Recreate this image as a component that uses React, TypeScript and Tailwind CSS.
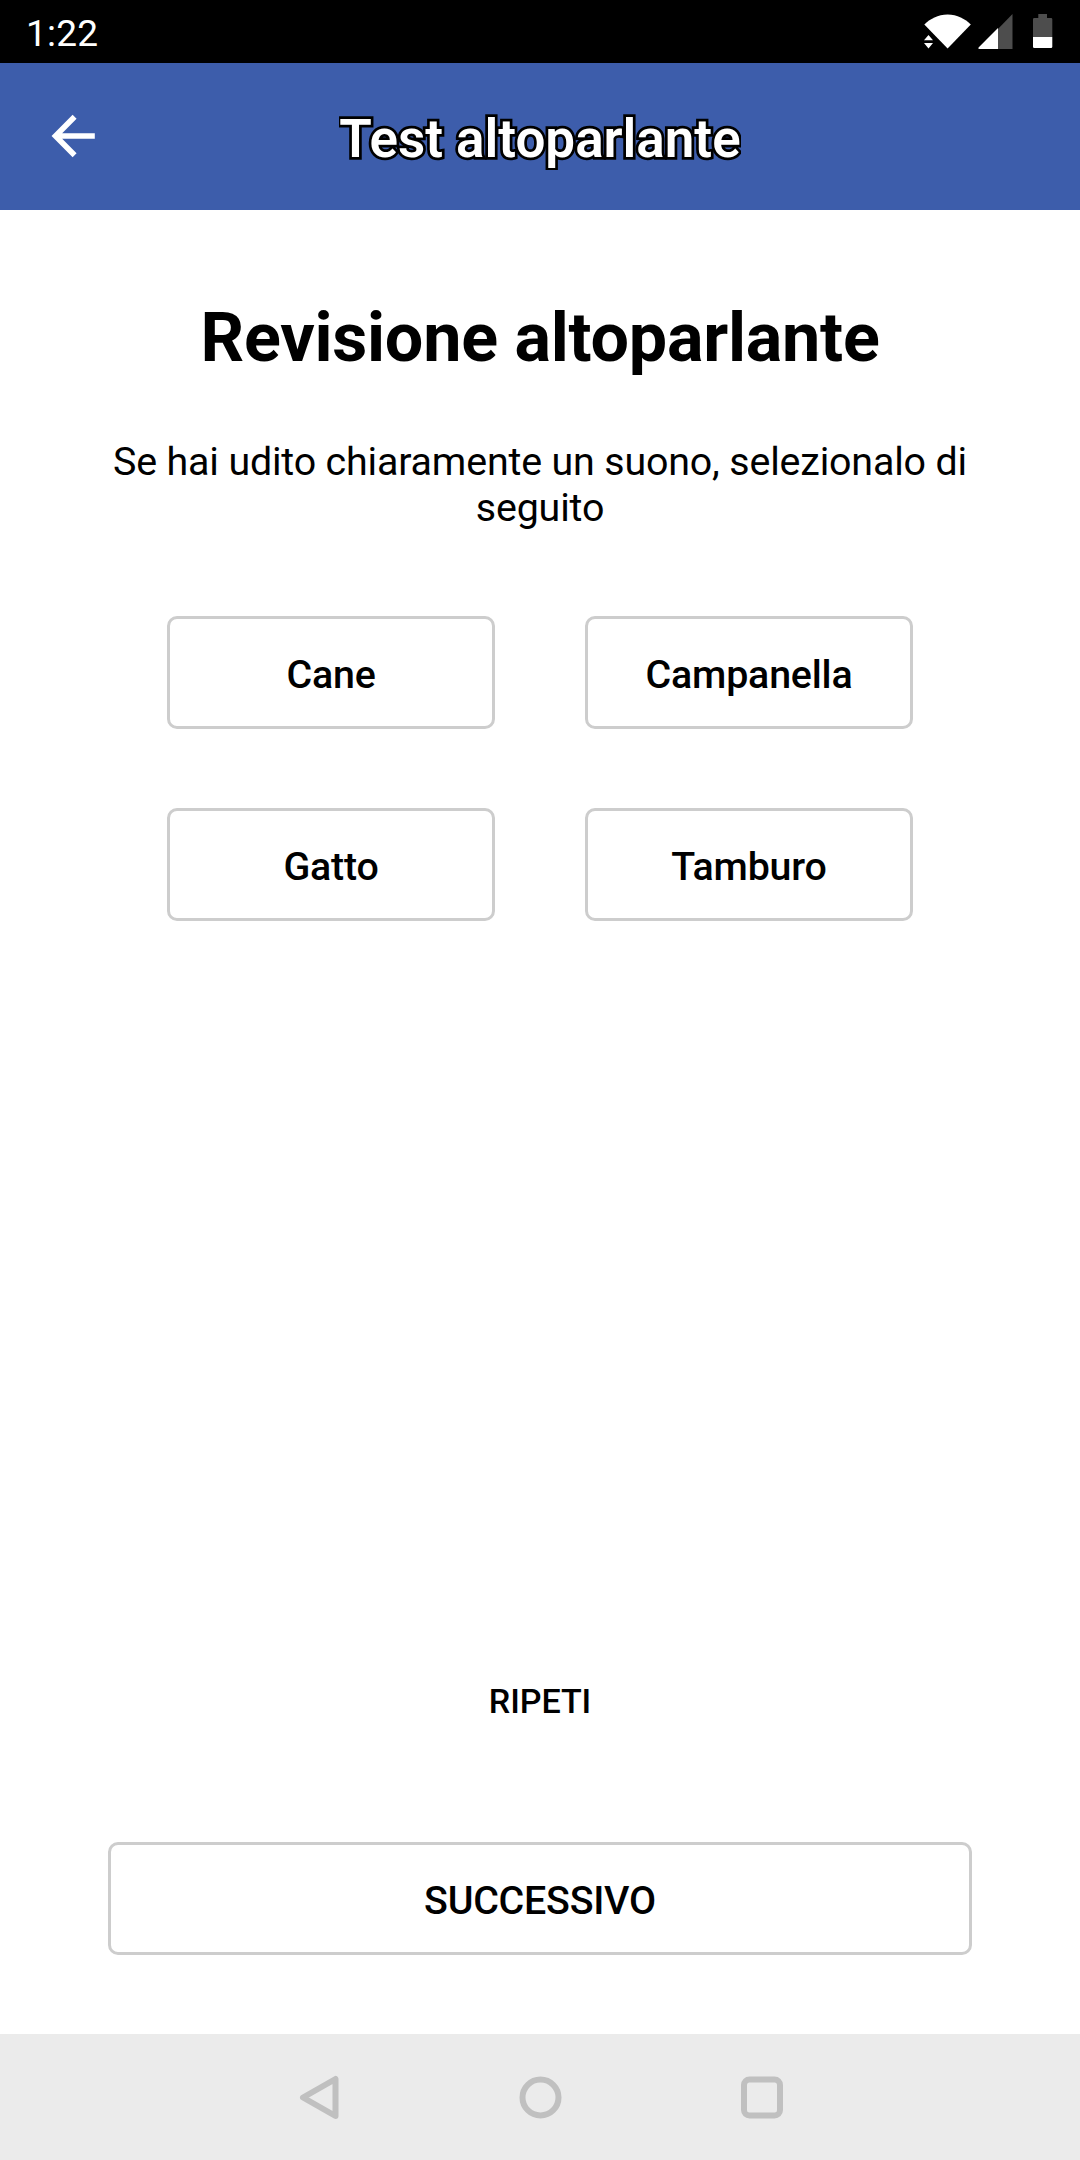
const sounds = ["Cane", "Campanella", "Gatto", "Tamburo"];

function StatusIcons() {
  return (
    <svg width="132" height="40" viewBox="922 11 132 40">
      {/* wifi */}
      <path
        d="M924.3 24.5C930 19 938 14.5 947.6 14.5S965.2 19 970.8 24.5L947.6 48.6Z"
        fill="#fff"
      />
      <path d="M924 40.3L928.5 35L933 40.3ZM924 43L933 43L928.5 48.5Z" fill="#fff" />
      {/* signal */}
      <path d="M1012.5 14V49H978.5Z" fill="#4d4d4d" />
      <path d="M998 28V49H979.5Q977.5 48.8 978.8 47.2Z" fill="#fff" />
      {/* battery */}
      <path
        d="M1038.3 14H1047V18H1051Q1052.3 18 1052.3 19.3V37H1033V19.3Q1033 18 1034.3 18H1038.3Z"
        fill="#4d4d4d"
      />
      <path
        d="M1033 37H1052.3V46.7Q1052.3 48 1051 48H1034.3Q1033 48 1033 46.7Z"
        fill="#fff"
      />
    </svg>
  );
}

export default function App() {
  return (
    <div className="flex h-[2160px] w-[1080px] flex-col bg-white font-['Roboto',sans-serif] text-black">
      <div className="flex h-[63px] items-start justify-between bg-black pl-[26px] pr-[26px]">
        <div className="pt-[12px] text-[37px] leading-[43px] tracking-[0.2px] text-white">
          1:22
        </div>
        <div className="pt-[11px]">
          <StatusIcons />
        </div>
      </div>

      <header className="grid h-[147px] grid-cols-[1fr_auto_1fr] items-center bg-[#3d5dab] text-white">
        <button className="ml-[41px] w-[63px]">
          <svg width="63" height="63" viewBox="0 0 63 63" fill="none" stroke="#fff" strokeWidth="5.6">
            <path d="M53.8 31H15M33.6 11.8L14.5 31L33.6 50.2" />
          </svg>
        </button>
        <h1 className="overflow-hidden pt-[5px] text-[53px] font-semibold leading-[62px] tracking-[-0.03px] [-webkit-text-stroke:5.5px_#000] [paint-order:stroke_fill] [stroke-linejoin:round]">
          Test altoparlante
        </h1>
      </header>

      <main className="flex flex-1 flex-col items-center">
        <h2 className="mt-[88px] text-[68.25px] font-bold leading-[80px] tracking-[-0.25px]">
          Revisione altoparlante
        </h2>
        <p className="mt-[61px] w-[864px] text-center text-[39.375px] leading-[46px] tracking-[-0.16px]">
          Se hai udito chiaramente un suono, selezionalo di seguito
        </p>
        <div className="mt-[85px] grid grid-cols-2 gap-x-[90px] gap-y-[79px]">
          {sounds.map((sound) => (
            <button
              key={sound}
              className="h-[113px] w-[328px] rounded-[10px] border-3 border-[#cdcdcd] pt-[5px] text-[39.375px] font-medium leading-[46px] tracking-[-0.2px]"
            >
              {sound}
            </button>
          ))}
        </div>
        <button className="mt-auto text-[34.125px] font-medium leading-[40px] tracking-[-0.1px]">
          RIPETI
        </button>
        <button className="mb-[79px] mt-[121px] h-[113px] w-[864px] rounded-[10px] border-3 border-[#cdcdcd] pt-[5px] text-[39.375px] font-medium leading-[46px] tracking-[-0.25px]">
          SUCCESSIVO
        </button>
      </main>

      <nav className="flex h-[126px] items-center justify-center gap-[159px] bg-[#ebebeb]">
        <svg width="63" height="63" viewBox="0 0 63 63" fill="none" stroke="#c0c0c0" strokeWidth="6" strokeLinejoin="round">
          <path d="M16 31.5L48.5 13V50Z" />
        </svg>
        <svg width="63" height="63" viewBox="0 0 63 63" fill="none" stroke="#c0c0c0" strokeWidth="6">
          <circle cx="31.5" cy="31.5" r="18" />
        </svg>
        <svg width="63" height="63" viewBox="0 0 63 63" fill="none" stroke="#c0c0c0" strokeWidth="6">
          <rect x="13" y="13.5" width="36" height="36" rx="5.5" />
        </svg>
      </nav>
    </div>
  );
}
